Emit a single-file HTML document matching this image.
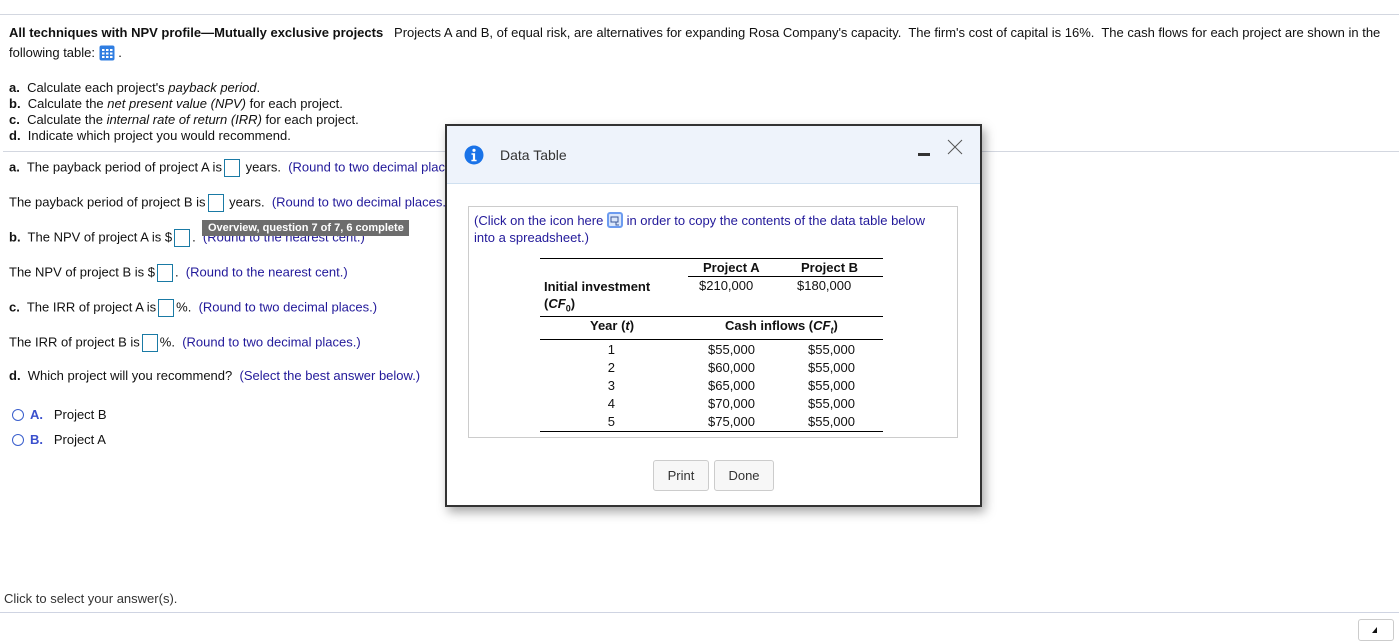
<!DOCTYPE html>
<html><head><meta charset="utf-8"><style>
body{margin:0;width:1399px;height:633px;position:relative;overflow:hidden;background:#fff;font-family:"Liberation Sans",Arial,sans-serif;font-size:13px;color:#111}
.a{position:absolute;white-space:nowrap}
.h{color:#22199a}
.box{display:inline-block;width:16px;height:18px;border:1px solid #1a7aa5;vertical-align:middle;margin:0 2px;box-sizing:border-box}
.ln{position:absolute;height:1px;background:#d3d7e0}
.tl{position:absolute;height:1px;background:#000}
.r{position:absolute;text-align:right}
.rad{display:inline-block;width:12px;height:12px;border:1px solid #3a5fcd;border-radius:50%;vertical-align:-2px;margin-right:6px;box-sizing:border-box}
.btn{position:absolute;border:1px solid #ccc;border-radius:3px;background:#f7f7f7;font-size:13px;color:#333;text-align:center;line-height:29px;height:29px}
</style></head><body>
<div class="ln" style="top:14px;left:0;width:1399px"></div>
<div class="a" style="left:9px;top:25px"><b>All techniques with NPV profile—Mutually exclusive projects</b>&nbsp;&nbsp; Projects A and B, of equal risk, are alternatives for expanding Rosa Company's capacity.&nbsp; The firm's cost of capital is 16%.&nbsp; The cash flows for each project are shown in the</div>
<div class="a" style="left:9px;top:45px">following table: <svg width="16" height="16" style="vertical-align:-4px" viewBox="0 0 16 16"><rect x="0.5" y="0.5" width="15" height="15" rx="2" fill="#2f7de1"/><g fill="#fff"><rect x="3" y="4" width="2.5" height="2"/><rect x="7" y="4" width="2.5" height="2"/><rect x="11" y="4" width="2.5" height="2"/><rect x="3" y="7.5" width="2.5" height="2"/><rect x="7" y="7.5" width="2.5" height="2"/><rect x="11" y="7.5" width="2.5" height="2"/><rect x="3" y="11" width="2.5" height="2"/><rect x="7" y="11" width="2.5" height="2"/><rect x="11" y="11" width="2.5" height="2"/></g></svg> .</div>
<div class="a" style="left:9px;top:80px"><b>a.</b>&nbsp; Calculate each project's <i>payback period</i>.</div>
<div class="a" style="left:9px;top:96px"><b>b.</b>&nbsp; Calculate the <i>net present value (NPV)</i> for each project.</div>
<div class="a" style="left:9px;top:112px"><b>c.</b>&nbsp; Calculate the <i>internal rate of return (IRR)</i> for each project.</div>
<div class="a" style="left:9px;top:128px"><b>d.</b>&nbsp; Indicate which project you would recommend.</div>
<div class="ln" style="top:151px;left:3px;width:1396px"></div>
<div class="a" style="left:9px;top:159px"><b>a.</b>&nbsp; The payback period of project A is<span class="box"></span> years.&nbsp; <span class="h">(Round to two decimal places.)</span></div>
<div class="a" style="left:9px;top:194px">The payback period of project B is<span class="box"></span> years.&nbsp; <span class="h">(Round to two decimal places.)</span></div>
<div class="a" style="left:9px;top:229px"><b>b.</b>&nbsp; The NPV of project A is $<span class="box"></span>.&nbsp; <span class="h">(Round to the nearest cent.)</span></div>
<div class="a" style="left:202px;top:220px;width:207px;height:16px;background:#6d6d6d;color:#fff;font-size:11px;font-weight:bold;line-height:16px;padding-left:6px;box-sizing:border-box">Overview, question 7 of 7, 6 complete</div>
<div class="a" style="left:9px;top:264px">The NPV of project B is $<span class="box"></span>.&nbsp; <span class="h">(Round to the nearest cent.)</span></div>
<div class="a" style="left:9px;top:299px"><b>c.</b>&nbsp; The IRR of project A is<span class="box"></span>%.&nbsp; <span class="h">(Round to two decimal places.)</span></div>
<div class="a" style="left:9px;top:334px">The IRR of project B is<span class="box"></span>%.&nbsp; <span class="h">(Round to two decimal places.)</span></div>
<div class="a" style="left:9px;top:368px"><b>d.</b>&nbsp; Which project will you recommend?&nbsp; <span class="h">(Select the best answer below.)</span></div>
<div class="a" style="left:12px;top:407px"><span class="rad"></span><b style="color:#3a4fcd">A.</b>&nbsp;&nbsp; Project B</div>
<div class="a" style="left:12px;top:432px"><span class="rad"></span><b style="color:#3a4fcd">B.</b>&nbsp;&nbsp; Project A</div>
<div class="a" style="left:4px;top:591px;font-size:13px;color:#333">Click to select your answer(s).</div>
<div class="ln" style="top:612px;left:0;width:1399px;background:#cfd4e2"></div>
<div class="a" style="left:1358px;top:619px;width:34px;height:20px;border:1px solid #ccc;border-radius:3px;background:#fff"></div>
<svg class="a" style="left:1371px;top:626px" width="8" height="8" viewBox="0 0 8 8"><path d="M6 1L1 7H6z" fill="#111"/></svg>

<div class="a" style="left:445px;top:124px;width:537px;height:383px;border:2px solid #333;box-sizing:border-box;background:#fff;box-shadow:3px 5px 10px rgba(0,0,0,.35)">
 <div class="a" style="left:0;top:0;width:533px;height:57px;background:#eef3fb;border-bottom:1px solid #cfe0f0"></div>
 <svg class="a" style="left:17px;top:19px" width="20" height="20" viewBox="0 0 20 20"><circle cx="10" cy="10" r="9.5" fill="#1a73e8"/><circle cx="10" cy="5.3" r="1.6" fill="#fff"/><path d="M7.5 8.3h3.6v6.4h1.5v1.5H7.4v-1.5h1.5v-4.9H7.5z" fill="#fff"/></svg>
 <div class="a" style="left:53px;top:21px;font-size:14px;color:#333">Data Table</div>
 <div class="a" style="left:471px;top:27px;width:12px;height:3px;background:#333"></div>
 <svg class="a" style="left:500px;top:13px" width="16" height="16" viewBox="0 0 16 16"><path d="M1 1L15 15M15 1L1 15" stroke="#555" stroke-width="1"/></svg>
 <div class="a" style="left:21px;top:80px;width:490px;height:232px;border:1px solid #ccc;box-sizing:border-box"></div>
 <div class="a h" style="left:27px;top:86px;line-height:17px">(Click on the icon here <svg width="16" height="16" style="vertical-align:-3px" viewBox="0 0 16 16"><rect x="1" y="1" width="14" height="14" rx="2" fill="#dbe7fb" stroke="#6d9cf0" stroke-width="2"/><rect x="4" y="5" width="7" height="5" fill="none" stroke="#3d5a99" stroke-width="1"/><path d="M9 10v3h3" fill="none" stroke="#3d5a99"/></svg> in order to copy the contents of the data table below<br>into a spreadsheet.)</div>
</div>
<div class="tl" style="left:540px;top:258px;width:343px"></div>
<div class="tl" style="left:688px;top:276px;width:195px"></div>
<div class="tl" style="left:540px;top:316px;width:343px"></div>
<div class="tl" style="left:540px;top:339px;width:343px"></div>
<div class="tl" style="left:540px;top:431px;width:343px"></div>
<div class="a" style="left:703px;top:260px;font-weight:bold">Project A</div>
<div class="a" style="left:801px;top:260px;font-weight:bold">Project B</div>
<div class="a" style="left:544px;top:278px;font-weight:bold;line-height:17px">Initial investment<br>(<i>CF</i><sub style="font-size:9px">0</sub>)</div>
<div class="a" style="left:699px;top:278px">$210,000</div>
<div class="a" style="left:797px;top:278px">$180,000</div>
<div class="a" style="left:590px;top:318px;font-weight:bold">Year (<i>t</i>)</div>
<div class="a" style="left:725px;top:318px;font-weight:bold">Cash inflows (<i>CF</i><sub style="font-size:9px"><i>t</i></sub>)</div>
<div class="r" style="left:590px;top:341px;width:25px;line-height:18px">1<br>2<br>3<br>4<br>5</div>
<div class="r" style="left:680px;top:341px;width:75px;line-height:18px">$55,000<br>$60,000<br>$65,000<br>$70,000<br>$75,000</div>
<div class="r" style="left:780px;top:341px;width:75px;line-height:18px">$55,000<br>$55,000<br>$55,000<br>$55,000<br>$55,000</div>
<div class="btn" style="left:653px;top:460px;width:54px">Print</div>
<div class="btn" style="left:714px;top:460px;width:58px">Done</div>
</body></html>
